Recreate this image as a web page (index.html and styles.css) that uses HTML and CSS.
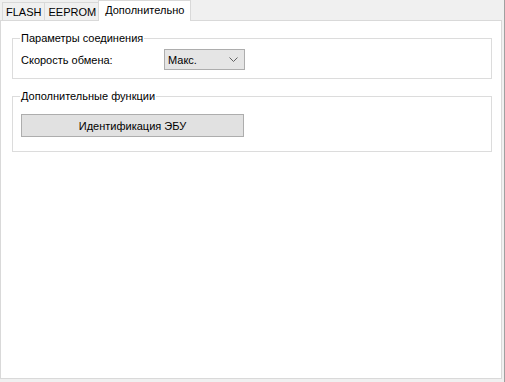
FILE: index.html
```html
<!DOCTYPE html>
<html lang="ru">
<head>
    <meta charset="UTF-8">
    <title>Дополнительно</title>
    <link rel="stylesheet" href="styles.css">
</head>
<body>
    <div class="window">
        <div class="tabs">
            <div class="tab">FLASH</div>
            <div class="tab">EEPROM</div>
            <div class="tab active">Дополнительно</div>
        </div>
        <div class="page">
            <fieldset class="group first">
                <legend>Параметры соединения</legend>
                <div class="row">
                    <span class="label">Скорость обмена:</span>
                    <div class="combo">
                        <span>Макс.</span>
                        <svg width="9" height="5" viewBox="0 0 9 5"><path d="M0.5 0.5 L4.5 4.5 L8.5 0.5" fill="none" stroke="#606060" stroke-width="1"/></svg>
                    </div>
                </div>
            </fieldset>
            <fieldset class="group second">
                <legend>Дополнительные функции</legend>
                <button class="btn">Идентификация ЭБУ</button>
            </fieldset>
        </div>
    </div>
</body>
</html>
```

FILE: styles.css
```css
body {
    margin: 0;
    font-family: "Liberation Sans", Arial, sans-serif;
    font-size: 11px;
    color: #000;
}
.window {
    width: 505px;
    height: 382px;
    background-color: #f0f0f0;
    box-sizing: border-box;
    padding: 0 2px 3px 0;
    display: flex;
    flex-direction: column;
    border-right: 1px solid #a0a0a0;
}
.tabs {
    display: flex;
    align-items: flex-end;
    height: 21px;
    padding-left: 2px;
    margin-bottom: -1px;
}
.tab {
    height: 19px;
    line-height: 18px;
    padding: 0 3px;
    border: 1px solid #d9d9d9;
    border-bottom: none;
    margin-right: -1px;
    box-sizing: border-box;
    background-color: #f0f0f0;
}
.tab.active {
    height: 21px;
    line-height: 19px;
    background-color: #fff;
    padding: 0 6px;
    margin-left: -1px;
    position: relative;
    z-index: 1;
}
.page {
    flex: 1;
    background-color: #fff;
    border: 1px solid #d9d9d9;
    padding: 10px 9px 0 11px;
    display: flex;
    flex-direction: column;
    gap: 10px;
}
.group {
    margin: 0;
    border: 1px solid #dcdcdc;
    padding: 0 8px;
}
.group legend {
    padding: 0 1px;
    margin-left: -1px;
    line-height: 14px;
}
.first {
    padding-top: 4px;
    padding-bottom: 8px;
}
.second {
    padding-top: 11px;
    padding-bottom: 14px;
}
.row {
    display: flex;
    align-items: center;
    height: 21px;
}
.label {
    width: 143px;
}
.combo {
    width: 81px;
    height: 21px;
    box-sizing: border-box;
    background-color: #e5e5e5;
    border: 1px solid #adadad;
    display: flex;
    align-items: center;
    justify-content: space-between;
    padding: 0 6px 0 3px;
}
.btn {
    display: block;
    width: 223px;
    height: 23px;
    margin: 0;
    font-family: inherit;
    font-size: 11px;
    color: #000;
    background-color: #e1e1e1;
    border: 1px solid #adadad;
    border-radius: 0;
    padding: 0;
}
```
